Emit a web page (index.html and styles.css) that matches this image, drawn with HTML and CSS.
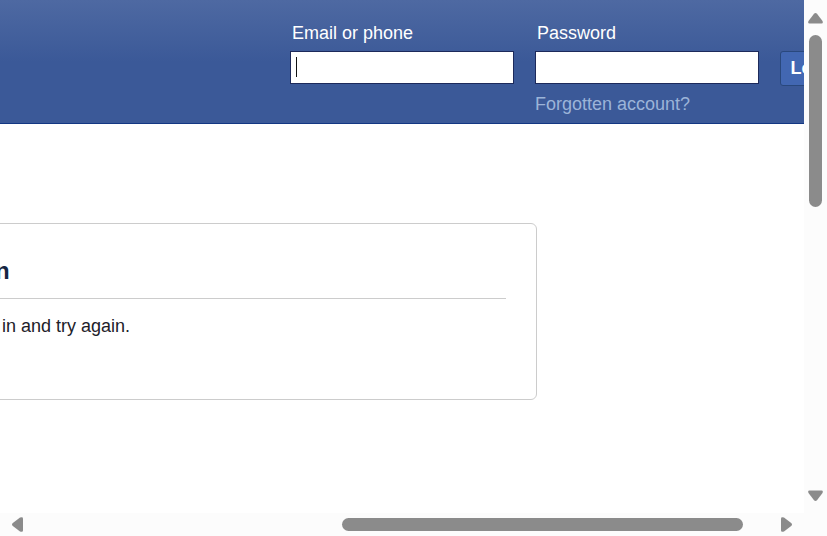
FILE: index.html
```
<!DOCTYPE html>
<html lang="en">
<head>
<meta charset="utf-8">
<title>Log in</title>
<link rel="stylesheet" href="styles.css">
</head>
<body>
<div class="frame">
  <div class="view">
    <header class="topbar">
      <form class="login">
        <div class="field">
          <label for="email">Email or phone</label>
          <input class="box active" id="email" type="text">
        </div>
        <div class="field">
          <label for="pass">Password</label>
          <input class="box" id="pass" type="password">
          <a class="forgot" href="#">Forgotten account?</a>
        </div>
        <button class="submit" type="button">Log In</button>
      </form>
    </header>
    <main class="card">
      <h2 class="title">n</h2>
      <p class="message">in and try again.</p>
    </main>
  </div>
  <div class="scroll vertical">
    <svg class="arrow-v" width="15" height="11" viewBox="0 0 15 11"><path d="M6 .8Q7.500-.8 9 .8L14.500 8Q15.500 10.500 13.500 10.500H1.500Q-.5 10.500.5 8Z"/></svg>
    <div class="track"><div class="thumb"></div></div>
    <svg class="arrow-v" width="15" height="11" viewBox="0 0 15 11"><path d="M6 10.200Q7.500 11.800 9 10.200L14.500 3Q15.500.5 13.500.5H1.500Q-.5.5.5 3Z"/></svg>
  </div>
  <div class="scroll horizontal">
    <svg class="arrow-h" width="11" height="15" viewBox="0 0 11 15"><path d="M.8 6Q-.8 7.500.8 9L8 14.500Q11 15.500 11 13.500V1.500Q11-.5 8 .5Z"/></svg>
    <div class="track"><div class="thumb"></div></div>
    <svg class="arrow-h" width="11" height="15" viewBox="0 0 11 15"><path d="M10.200 6Q11.800 7.500 10.200 9L3 14.500Q0 15.500 0 13.500V1.500Q0-.5 3 .5Z"/></svg>
  </div>
</div>
</body>
</html>
```
FILE: styles.css
```
* { box-sizing: border-box; }

body {
  margin: 0;
  background: #fcfcfc;
  font-family: "Liberation Sans", Arial, sans-serif;
  font-size: 18px;
  line-height: 24px;
}

.frame {
  display: grid;
  grid-template-columns: minmax(0, 1fr) 23px;
  grid-template-rows: minmax(0, 1fr) 23px;
  height: 100vh;
}

.view {
  overflow: hidden;
  background: #fff;
}

.topbar {
  height: 124px;
  padding-top: 21px;
  border-bottom: 1px solid #133783;
  background: linear-gradient(#4e69a2, #3b5998 50%);
  color: #fff;
}

/* The bar is wider than the view, so the button runs past its edge. */
.login {
  display: flex;
  justify-content: flex-end;
  gap: 21px;
  margin-right: -51px;
}

.field {
  display: flex;
  flex-direction: column;
  width: 224px;
}

.field label {
  padding-left: 2px;
  margin-bottom: 6px;
}

.box {
  width: 100%;
  height: 33px;
  padding: 4px 6px;
  border: 1px solid #1d2a5b;
  border-radius: 0;
  outline: none;
  background-color: #fff;
  font: inherit;
}

.active {
  background-image: linear-gradient(#111, #111);
  background-repeat: no-repeat;
  background-position: 5px 5px;
  background-size: 1px 20px;
}

.forgot {
  margin-top: 8px;
  color: #9cb4d8;
  text-decoration: none;
}

.submit {
  flex: none;
  width: 75px;
  height: 35px;
  margin-top: 30px;
  padding: 0 0 2px;
  border: 1px solid #29487d;
  border-radius: 3px;
  background: #4267b2;
  color: #fff;
  font: inherit;
  font-weight: bold;
}

.card {
  margin: 99px 267px 0 -6px;
  padding: 30px 30px 61px 0;
  border: 1px solid #ccc;
  border-radius: 6px;
}

.title {
  margin: 0;
  padding-bottom: 11px;
  border-bottom: 1px solid #ccc;
  color: #162643;
  font-size: 24px;
  line-height: 33px;
}

.message {
  margin: 15px 0 0;
  padding-left: 7px;
  color: #1d2129;
}

.scroll {
  display: flex;
  align-items: center;
  background: #fcfcfc;
}

.scroll svg {
  flex: none;
  fill: #8b8b8b;
}

.track {
  display: grid;
  flex: 1;
}

.thumb {
  border-radius: 7px;
  background: #8b8b8b;
}

.vertical {
  flex-direction: column;
  padding: 13px 0 12px;
}

.vertical .track {
  grid-template-rows: 172fr 272fr;
  width: 13px;
  margin: 11px 0;
}

.horizontal { padding: 0 12px; }

.horizontal .track {
  grid-template-columns: 307fr 401fr 26fr;
  height: 13px;
  margin: 0 12px;
}

.horizontal .thumb { grid-column: 2; }
```
